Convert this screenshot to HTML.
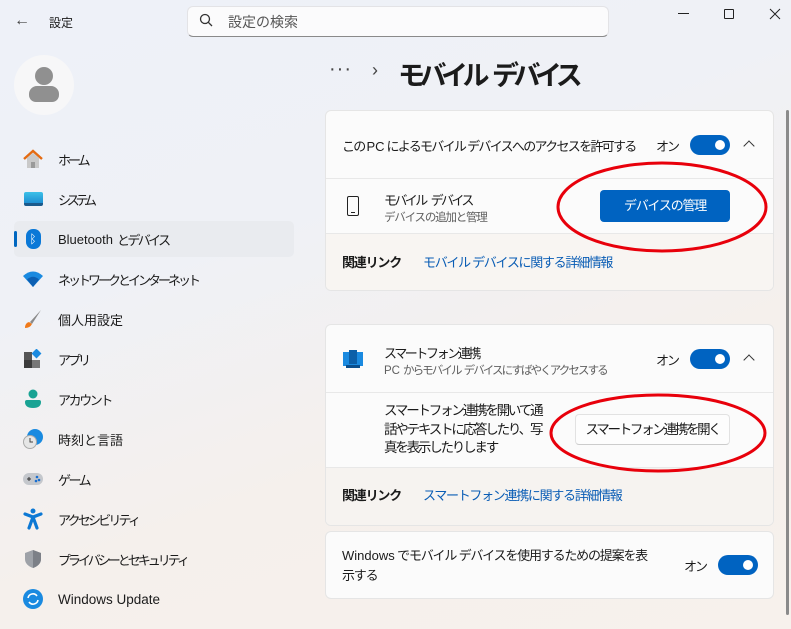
<!DOCTYPE html>
<html><head><meta charset="utf-8"><style>
*{box-sizing:border-box;margin:0;padding:0}
body{width:791px;height:629px;overflow:hidden;font-family:"Liberation Sans","Noto Sans CJK JP",sans-serif;color:#1b1b1b;font-size:13px;background:linear-gradient(160deg,#eef1f8 0%,#eff1f6 35%,#f5f0ec 65%,#f7f1ec 100%);position:relative;white-space:nowrap}
.a{position:absolute}
.l{letter-spacing:0}
.nav{position:absolute;left:14px;width:280px;height:36px;display:flex;align-items:center;letter-spacing:-3px}
.nav .ic{width:22px;height:22px;margin-left:8px;margin-right:14px;display:flex;align-items:center;justify-content:center}
.card{position:absolute;left:325px;width:449px;background:#fbfbfb;border:1px solid #e5e5e5;border-radius:6px;overflow:hidden}
.row{position:absolute;left:0;right:0}
.tog{position:absolute;width:40px;height:20px;border-radius:10px;background:#0063c1}
.tog:after{content:"";position:absolute;right:5px;top:5px;width:10px;height:10px;border-radius:50%;background:#fff}
.chev{position:absolute;width:8px;height:8px;border-left:1.3px solid #333;border-top:1.3px solid #333;transform:rotate(45deg)}
.sub{font-size:11.5px;color:#5f5f5f}
.link{color:#0a5db5}
</style></head><body>
<div class="a" style="left:14px;top:12px;font-size:16px;color:#444">←</div>
<div class="a" style="left:49px;top:14px;font-size:12px">設定</div>
<div class="a" style="left:187px;top:6px;width:422px;height:31px;background:#fbfbfc;border:1px solid #e3e3e6;border-bottom-color:#8a8a8a;border-radius:6px"></div>
<svg class="a" style="left:199px;top:13px" width="14" height="14"><circle cx="6" cy="6" r="4.5" fill="none" stroke="#333" stroke-width="1.3"/><line x1="9.3" y1="9.3" x2="13" y2="13" stroke="#333" stroke-width="1.3"/></svg>
<div class="a" style="left:228px;top:12px;font-size:14px;color:#555">設定の検索</div>
<div class="a" style="left:678px;top:13px;width:11px;height:1px;background:#222"></div>
<div class="a" style="left:724px;top:9px;width:10px;height:10px;border:1px solid #222;border-radius:1px"></div>
<svg class="a" style="left:769px;top:8px" width="12" height="12"><path d="M1 1L11 11M11 1L1 11" stroke="#222" stroke-width="1"/></svg>
<div class="a" style="left:14px;top:55px;width:60px;height:60px;border-radius:50%;background:#f7f7f8"></div>
<div class="a" style="left:35px;top:67px;width:18px;height:18px;border-radius:50%;background:#909090"></div>
<div class="a" style="left:29px;top:86px;width:30px;height:16px;border-radius:8px 8px 7px 7px;background:#909090"></div>
<div class="nav" style="top:141px"><div class="ic"><svg width="22" height="20"><path d="M2 10L11 2L20 10" fill="none" stroke="#e46b12" stroke-width="2.4"/><path d="M5 9V19H17V9L11 4Z" fill="#c9c9c9"/><rect x="9" y="13" width="4" height="6" fill="#9a9a9a"/></svg></div>ホーム</div>
<div class="nav" style="top:181px;letter-spacing:-4.2px"><div class="ic"><div style="width:19px;height:14px;background:linear-gradient(#3cc1e8,#1e8fd2);border-bottom:3px solid #1a5a8c;border-radius:2px"></div></div>システム</div>
<div class="nav" style="top:221px;background:#e9ebef;border-radius:5px;letter-spacing:-2.6px"><div style="position:absolute;left:0;top:10px;width:3px;height:16px;background:#0067c0;border-radius:2px"></div><div class="ic"><div style="width:15px;height:20px;background:#0a78d7;border-radius:7px;color:#fff;font-size:12px;text-align:center;line-height:20px;letter-spacing:0">ᛒ</div></div><span class="l" style="margin-right:4px">Bluetooth</span>とデバイス</div>
<div class="nav" style="top:261px"><div class="ic"><svg width="22" height="18"><path d="M1 6Q11 -3 21 6L11 17Z" fill="#1a8ae0"/><path d="M5 9.5Q11 4 17 9.5L11 17Z" fill="#0c5fb2"/></svg></div>ネットワークとインターネット</div>
<div class="nav" style="top:301px;letter-spacing:0"><div class="ic"><svg width="20" height="20"><path d="M18 1L7 13L9 15Z" fill="#8a8a8a"/><path d="M6 13Q2 14 2 19Q7 19 9 15Z" fill="#f07a1a"/></svg></div>個人用設定</div>
<div class="nav" style="top:341px"><div class="ic"><svg width="20" height="20"><rect x="1" y="3" width="8" height="8" fill="#555"/><rect x="1" y="11" width="8" height="8" fill="#3b3b3b"/><rect x="9" y="11" width="8" height="8" fill="#777"/><rect x="10" y="1" width="7" height="7" fill="#1a8ae0" transform="rotate(45 13.5 4.5)"/></svg></div>アプリ</div>
<div class="nav" style="top:381px;letter-spacing:-2.4px"><div class="ic"><svg width="20" height="20"><circle cx="10" cy="5" r="4.5" fill="#19a394"/><path d="M2 13Q2 11 4 11H16Q18 11 18 13Q18 19 10 19Q2 19 2 13Z" fill="#19a394"/></svg></div>アカウント</div>
<div class="nav" style="top:421px;letter-spacing:0"><div class="ic"><svg width="22" height="22"><circle cx="13" cy="9" r="8" fill="#1a8ae0"/><circle cx="8" cy="14" r="6.5" fill="#e6e6e6" stroke="#aaa"/><path d="M8 10V14H11" stroke="#444" fill="none"/></svg></div>時刻と言語</div>
<div class="nav" style="top:461px;letter-spacing:-2.5px"><div class="ic"><svg width="22" height="14"><rect x="1" y="1" width="20" height="12" rx="6" fill="#c4c7cc"/><path d="M5 7h4M7 5v4" stroke="#333"/><circle cx="15" cy="5" r="1.3" fill="#1a6fd0"/><circle cx="17" cy="8" r="1.3" fill="#1a6fd0"/><circle cx="14" cy="9" r="1.3" fill="#1a6fd0"/></svg></div>ゲーム</div>
<div class="nav" style="top:501px;letter-spacing:-2.8px"><div class="ic"><svg width="20" height="22"><circle cx="10" cy="3" r="2.5" fill="#0c78d4"/><path d="M2 6L10 9L18 6M10 9L6 20M10 9L14 20" stroke="#0c78d4" stroke-width="3.2" fill="none" stroke-linecap="round"/></svg></div>アクセシビリティ</div>
<div class="nav" style="top:541px"><div class="ic"><svg width="18" height="20"><path d="M9 1L17 4V10Q17 16 9 19Q1 16 1 10V4Z" fill="#9ea2a8"/><path d="M9 1L17 4V10Q17 16 9 19Z" fill="#7c8087"/></svg></div>プライバシーとセキュリティ</div>
<div class="nav" style="top:581px;letter-spacing:0;font-size:13.5px"><div class="ic"><svg width="22" height="22"><circle cx="11" cy="11" r="10" fill="#1a8ae0"/><path d="M6 10A5 5 0 0 1 15 8M16 12A5 5 0 0 1 7 14" stroke="#fff" stroke-width="1.6" fill="none"/></svg></div>Windows Update</div>
<div class="a" style="left:329px;top:58px;font-size:20px;letter-spacing:1px;color:#444">···</div>
<div class="a" style="left:372px;top:60px;font-size:18px;color:#444">›</div>
<div class="a" style="left:398px;top:54px;font-size:27px;font-weight:600;letter-spacing:-5.5px">モバイル<span style="margin-left:8px">デバイス</span></div>
<div class="card" style="top:110px;height:181px">
 <div class="row" style="top:0;height:68px;border-bottom:1px solid #e8e8e8"><div class="a" style="left:16px;top:25px;letter-spacing:-1.7px">この <span class="l">PC</span> によるモバイル デバイスへのアクセスを許可する</div><div class="a" style="left:330px;top:25px;letter-spacing:-2px">オン</div><div class="tog" style="left:364px;top:24px"></div><div class="chev" style="left:419px;top:31px"></div></div>
 <div class="row" style="top:68px;height:55px;border-bottom:1px solid #e8e8e8"><div class="a" style="left:21px;top:17px;width:12px;height:20px;border:1.3px solid #222;border-radius:2px"><div style="position:absolute;left:3px;bottom:2px;width:4px;height:1px;background:#222"></div></div><div class="a" style="left:58px;top:11px;letter-spacing:-2.6px">モバイル<span style="margin-left:5px">デバイス</span></div><div class="a sub" style="left:58px;top:30px;letter-spacing:-1.2px">デバイスの追加と管理</div><div class="a" style="left:274px;top:11px;width:130px;height:32px;background:#0063c1;border-radius:4px;color:#fff;text-align:center;line-height:32px;letter-spacing:-1.2px">デバイスの管理</div></div>
 <div class="row" style="top:123px;height:58px;background:#f8f5f2"><div class="a" style="left:16px;top:18px;font-weight:600;letter-spacing:-1.2px">関連リンク</div><div class="a link" style="left:97px;top:18px;letter-spacing:-1.3px">モバイル デバイスに関する詳細情報</div></div>
</div>
<div class="card" style="top:324px;height:202px">
 <div class="row" style="top:0;height:68px;border-bottom:1px solid #e8e8e8"><svg class="a" style="left:16px;top:24px" width="22" height="20"><rect x="1" y="3" width="20" height="14" fill="#1a8ae0"/><rect x="7" y="1" width="8" height="14" fill="#0c5fa8"/><rect x="4" y="16" width="14" height="3" fill="#0a4e8c"/></svg><div class="a" style="left:58px;top:18px;letter-spacing:-2.4px">スマートフォン連携</div><div class="a sub" style="left:58px;top:37px;letter-spacing:-1.9px"><span class="l" style="margin-right:3px">PC</span>からモバイル<span style="margin-left:3px">デバイスにすばやくアクセスする</span></div><div class="a" style="left:330px;top:25px;letter-spacing:-2px">オン</div><div class="tog" style="left:364px;top:24px"></div><div class="chev" style="left:419px;top:31px"></div></div>
 <div class="row" style="top:68px;height:75px;border-bottom:1px solid #e8e8e8"><div class="a" style="left:58px;top:9px;width:168px;line-height:18.5px;font-size:13.5px;letter-spacing:-2.2px;white-space:normal">スマートフォン連携を開いて通話やテキストに応答したり、写真を表示したりします</div><div class="a" style="left:249px;top:21px;width:155px;height:31px;background:#fdfdfd;border:1px solid #e2e2e2;border-bottom-color:#ccc;border-radius:4px;text-align:center;line-height:29px;font-size:13.5px;letter-spacing:-2.3px">スマートフォン連携を開く</div></div>
 <div class="row" style="top:143px;height:59px;background:#f6f3f0"><div class="a" style="left:16px;top:17px;font-weight:600;letter-spacing:-1.2px">関連リンク</div><div class="a link" style="left:97px;top:17px;letter-spacing:-1.3px">スマートフォン連携に関する詳細情報</div></div>
</div>
<div class="card" style="top:531px;height:68px">
 <div class="a" style="left:16px;top:14px;line-height:20px;letter-spacing:-1.2px"><span class="l">Windows</span> でモバイル デバイスを使用するための提案を表<br>示する</div><div class="a" style="left:358px;top:24px;letter-spacing:-2px">オン</div><div class="tog" style="left:392px;top:23px"></div>
</div>
<div class="a" style="left:786px;top:110px;width:3px;height:505px;background:#8a8a8a;border-radius:2px"></div>
<svg class="a" style="left:0;top:0" width="791" height="629"><ellipse cx="662" cy="207" rx="104" ry="44" fill="none" stroke="#e8000b" stroke-width="3"/><ellipse cx="658" cy="433" rx="107" ry="38" fill="none" stroke="#e8000b" stroke-width="3"/></svg>
</body></html>
